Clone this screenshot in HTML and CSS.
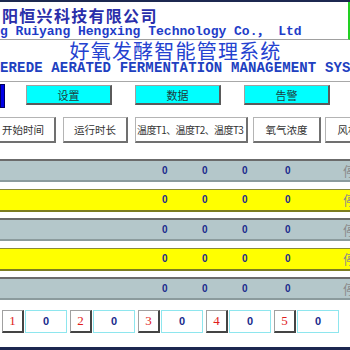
FILE: index.html
```html
<!DOCTYPE html>
<html lang="zh-CN">
<head>
  <meta charset="UTF-8">
  <meta name="viewport" content="width=device-width, initial-scale=1.0">
  <title>好氧发酵智能管理系统</title>
  <link rel="stylesheet" href="styles.css">
</head>
<body>
  <div class="screen">
    <div class="header">
      <div class="company-cn">阳恒兴科技有限公司</div>
      <div class="company-en">g Ruiyang Hengxing Technology Co.， Ltd</div>
    </div>

    <h1 class="title">好氧发酵智能管理系统</h1>
    <div class="subtitle">EREDE AERATED FERMENTATION MANAGEMENT SYSTEM</div>

    <div class="toolbar">
      <div class="home-btn"></div>
      <button class="nav-btn">设置</button>
      <button class="nav-btn">数据</button>
      <button class="nav-btn">告警</button>
    </div>

    <div class="tabs">
      <div class="tab tab-start">开始时间</div>
      <div class="tab tab-run">运行时长</div>
      <div class="tab tab-temp">温度T1、温度T2、温度T3</div>
      <div class="tab tab-oxy">氧气浓度</div>
      <div class="tab tab-fan">风机转速</div>
    </div>

    <div class="rows">
      <div class="row gray">
        <span></span><span class="val">0</span><span class="val">0</span><span class="val">0</span><span class="val">0</span><span class="state">停止</span>
      </div>
      <div class="row yellow">
        <span></span><span class="val">0</span><span class="val">0</span><span class="val">0</span><span class="val">0</span><span class="state">停止</span>
      </div>
      <div class="row gray">
        <span></span><span class="val">0</span><span class="val">0</span><span class="val">0</span><span class="val">0</span><span class="state">停止</span>
      </div>
      <div class="row yellow">
        <span></span><span class="val">0</span><span class="val">0</span><span class="val">0</span><span class="val">0</span><span class="state">停止</span>
      </div>
      <div class="row gray">
        <span></span><span class="val">0</span><span class="val">0</span><span class="val">0</span><span class="val">0</span><span class="state">停止</span>
      </div>
    </div>

    <div class="slots">
      <div class="slot"><span class="slot-num">1</span><span class="slot-val">0</span></div>
      <div class="slot"><span class="slot-num">2</span><span class="slot-val">0</span></div>
      <div class="slot"><span class="slot-num">3</span><span class="slot-val">0</span></div>
      <div class="slot"><span class="slot-num">4</span><span class="slot-val">0</span></div>
      <div class="slot"><span class="slot-num">5</span><span class="slot-val">0</span></div>
    </div>
  </div>
</body>
</html>
```

FILE: styles.css
```css
body {
  margin: 0;
  width: 350px;
  height: 350px;
  overflow: hidden;
  background: #fff;
  font-family: "Noto Sans CJK SC", "Noto Sans", sans-serif;
}
.screen {
  box-sizing: border-box;
  height: 350px;
  border-top: 2px solid #1c2850;
  border-bottom: 3px solid #1c2850;
  display: flex;
  flex-direction: column;
  overflow: hidden;
}
.header {
  box-sizing: border-box;
  height: 38px;
  padding-top: 4px;
  border-right: 2px solid #22d022;
  border-bottom: 1px solid #a0a0a0;
  color: #2a2eaa;
  white-space: nowrap;
  overflow: hidden;
}
.company-cn {
  padding-left: 2px;
  font-size: 16px;
  font-weight: bold;
  line-height: 19px;
  letter-spacing: 1.3px;
}
.company-en {
  font-family: "Liberation Mono", monospace;
  font-size: 13px;
  font-weight: bold;
  line-height: 14px;
  color: #1e3cc8;
}
.title {
  margin: 0;
  padding-left: 1px;
  font-size: 20px;
  font-weight: normal;
  line-height: 21px;
  letter-spacing: 1.2px;
  text-align: center;
  color: #2442d0;
}
.subtitle {
  font-family: "Liberation Mono", monospace;
  font-size: 14px;
  font-weight: bold;
  line-height: 14px;
  letter-spacing: 0.15px;
  color: #2040c0;
  white-space: nowrap;
  overflow: hidden;
}
.toolbar {
  margin-top: 6px;
  padding-top: 2px;
  border-top: 1px solid #a8a8a8;
  display: flex;
  align-items: flex-start;
  gap: 23px;
}
.home-btn {
  box-sizing: border-box;
  width: 5px;
  height: 24px;
  margin-right: -2px;
  background: #0000e8;
  border: 1px solid #000060;
}
.nav-btn {
  box-sizing: border-box;
  width: 86px;
  height: 20px;
  margin-top: 1px;
  padding: 0;
  background: #00ffff;
  border: 1px solid #a0a0a0;
  border-right: 2px solid #5a5a5a;
  border-bottom: 2px solid #5a5a5a;
  font-family: "Noto Sans CJK SC", sans-serif;
  font-size: 11px;
  line-height: 16px;
  color: #1e3c3c;
}
.tabs {
  margin-top: 9px;
  margin-left: -9px;
  display: flex;
  white-space: nowrap;
}
.tab {
  box-sizing: border-box;
  height: 26px;
  flex: none;
  background: #fff;
  border: 1px solid #b4b4b4;
  border-right: 2px solid #707070;
  border-bottom: 2px solid #707070;
  font-size: 10.5px;
  line-height: 23px;
  text-align: center;
  color: #333;
  overflow: hidden;
}
.tab-start { width: 65px; }
.tab-run { width: 65px; margin-left: 7px; }
.tab-temp {
  width: 113px;
  margin-left: 7px;
  padding-left: 1px;
  font-size: 10px;
  letter-spacing: -0.6px;
  text-align: left;
}
.tab-oxy { width: 68px; margin-left: 5px; }
.tab-fan { width: 68px; margin-left: 4px; }
.rows {
  margin-top: 16px;
  display: flex;
  flex-direction: column;
  gap: 6.5px;
}
.row {
  box-sizing: border-box;
  height: 23px;
  display: grid;
  grid-template-columns: 162px 40px 40px 43px 58px auto;
  align-items: center;
  white-space: nowrap;
}
.row.gray {
  background: #b4c7ca;
  border-top: 2px solid #6b6b6b;
  border-bottom: 2px solid #8b9b9d;
}
.row.yellow {
  background: #ffff00;
  border-top: 1px solid #8a8a34;
  border-bottom: 2px solid #7c7c20;
}
.val {
  font-family: "Liberation Sans", Arial, sans-serif;
  font-size: 10px;
  font-weight: bold;
  color: #1a2a8c;
}
.state {
  font-size: 13px;
  color: #8a8a8a;
}
.slots {
  margin-top: 10px;
  padding-left: 2px;
  display: flex;
  gap: 3px;
}
.slot {
  display: flex;
  gap: 1px;
}
.slot-num {
  box-sizing: border-box;
  width: 22px;
  height: 23px;
  border: 1px solid #a0a0a0;
  border-right: 2px solid #444;
  border-bottom: 2px solid #444;
  font-family: "Liberation Serif", serif;
  font-size: 13px;
  line-height: 20px;
  text-align: center;
  color: #e01c1c;
}
.slot-val {
  box-sizing: border-box;
  width: 42px;
  height: 23px;
  border: 1px solid #8ee6ee;
  font-family: "Liberation Sans", Arial, sans-serif;
  font-size: 11px;
  font-weight: bold;
  line-height: 21px;
  text-align: center;
  color: #1a2a8c;
}
```
